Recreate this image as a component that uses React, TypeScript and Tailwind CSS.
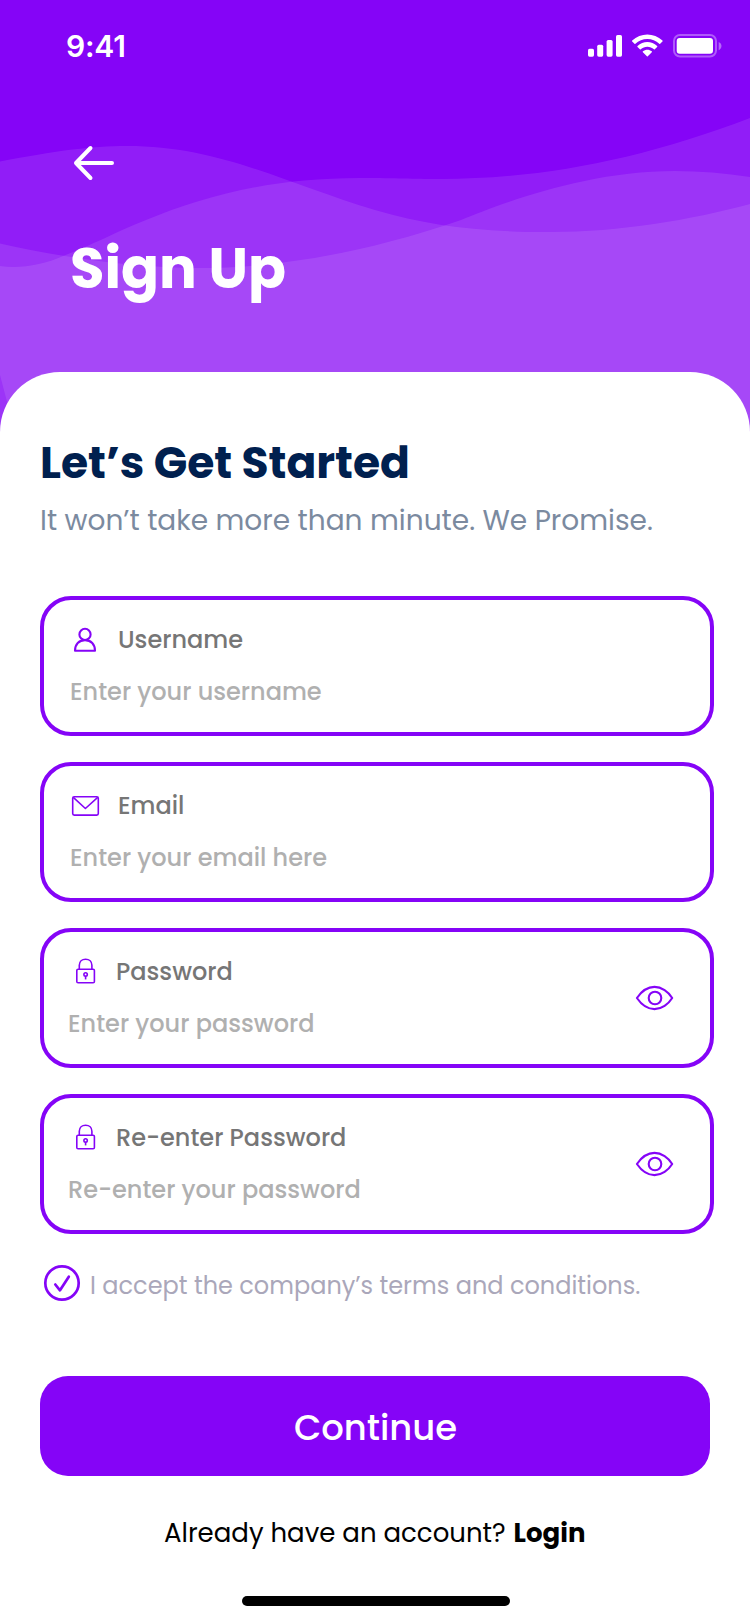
import type { ReactNode } from 'react'

function Waves() {
  return (
    <svg className="absolute left-0 top-0 -z-10" width="750" height="440" viewBox="0 0 750 440" fill="#fff" fillOpacity="0.1">
      <path d="M0 161.500C55 151 90 146 127 146C220 146 285 183 375 210C430 226 480 232 550 232C620 232 690 220 750 204V440H0Z" />
      <path d="M0 266C20 269 43 265 63 256C90 246 118 231 146 220C205 196 270 178 360 178C400 178 410 179 440 179C540 179 640 160 750 118V440H0Z" />
      <path d="M0 243.500C65 258 135 268 200 268C270 268 360 255 461 220C500 204 585 171 675 171C700 171 725 173 750 177V440H17L0 375Z" />
    </svg>
  )
}

function StatusIcons() {
  return (
    <svg width="136" height="24" viewBox="0 0 136 24" fill="#fff">
      <rect x="2" y="14.700" width="6" height="8" rx="1.600" />
      <rect x="11.200" y="10.700" width="6" height="12" rx="1.600" />
      <rect x="20.600" y="6" width="6" height="16.700" rx="1.600" />
      <rect x="30" y="1" width="6" height="21.700" rx="1.600" />
      <g transform="translate(46 0.500) scale(2)">
        <path d="M7.666 2.278C9.892 2.278 12.032 3.134 13.645 4.667C13.766 4.785 13.960 4.784 14.080 4.663L15.241 3.490C15.302 3.429 15.335 3.346 15.335 3.260C15.334 3.174 15.299 3.092 15.238 3.032C11.005-1.011 4.327-1.011 0.094 3.032C0.033 3.092-0.002 3.174-0.003 3.260C-0.004 3.346 0.030 3.429 0.091 3.490L1.252 4.663C1.372 4.784 1.566 4.785 1.687 4.667C3.300 3.133 5.441 2.278 7.666 2.278Z" />
        <path d="M7.666 6.096C8.889 6.096 10.068 6.550 10.975 7.371C11.097 7.487 11.290 7.485 11.410 7.365L12.569 6.192C12.631 6.130 12.664 6.047 12.664 5.960C12.663 5.873 12.627 5.791 12.565 5.730C9.805 3.155 5.531 3.155 2.770 5.730C2.708 5.791 2.672 5.873 2.672 5.960C2.671 6.047 2.705 6.130 2.766 6.192L3.925 7.365C4.045 7.485 4.238 7.487 4.361 7.371C5.266 6.551 6.445 6.096 7.666 6.096Z" />
        <path d="M9.989 8.665C9.991 8.752 9.958 8.836 9.897 8.897L7.891 10.921C7.832 10.980 7.752 11.014 7.668 11.014C7.584 11.014 7.504 10.980 7.446 10.921L5.439 8.897C5.378 8.836 5.345 8.752 5.347 8.665C5.349 8.578 5.386 8.495 5.449 8.437C6.729 7.298 8.607 7.298 9.887 8.437C9.950 8.495 9.987 8.578 9.989 8.665Z" />
      </g>
      <rect x="88" y="1" width="42" height="21.500" rx="6" fill="none" stroke="#fff" strokeOpacity="0.350" strokeWidth="2" />
      <rect x="90.700" y="4" width="36.300" height="15.700" rx="3" />
      <path d="M132.700 8V16.200C134.300 15.500 135.500 14 135.500 12.100C135.500 10.200 134.300 8.700 132.700 8Z" fillOpacity="0.400" />
    </svg>
  )
}

function UserIcon() {
  return (
    <svg width="30" height="28" viewBox="0 0 30 28" fill="none" stroke="#8504f7" strokeWidth="2.100" strokeLinejoin="round">
      <circle cx="15" cy="8.400" r="5.600" />
      <path d="M5 24.700C5 18.300 9 14.100 15 14.100S25 18.300 25 24.700Z" />
    </svg>
  )
}

function MailIcon() {
  return (
    <svg width="30" height="28" viewBox="0 0 30 28" fill="none" stroke="#8504f7" strokeWidth="1.600" strokeLinejoin="round">
      <rect x="2.700" y="4.700" width="25.600" height="18.400" rx="1.500" />
      <path d="M3.300 5.400L15.400 16.500L27.700 5.400" />
    </svg>
  )
}

function LockIcon() {
  return (
    <svg width="30" height="28" viewBox="0 0 30 28" fill="none" stroke="#8504f7" strokeWidth="1.600">
      <rect x="6.800" y="11.300" width="17.600" height="13.500" rx="1.300" />
      <path d="M9.300 11V7.200C9.300 3.400 12 1.200 15.600 1.200S21.900 3.400 21.900 7.200V11" />
      <circle cx="15.600" cy="16.400" r="1.700" />
      <path d="M15.600 18.100V21.400" />
    </svg>
  )
}

function EyeIcon() {
  return (
    <svg className="ml-auto shrink-0" width="40" height="28" viewBox="0 0 40 28" fill="none" stroke="#8504f7" strokeWidth="2.100" strokeLinejoin="round">
      <path d="M1.900 14C6 8 12.500 2.900 19.500 2.900S33.500 8 37.200 14C33.500 20 26.500 25.100 19.500 25.100S6 20 1.900 14Z" />
      <circle cx="20" cy="14" r="6.300" />
    </svg>
  )
}

type FieldProps = {
  icon: ReactNode
  label: string
  placeholder: string
  secret?: boolean
}

function Field({ icon, label, placeholder, secret }: FieldProps) {
  return (
    <div className={`flex h-[140px] items-center rounded-[31px] border-4 border-[#8504f7] pr-[35px] ${secret ? 'pl-6' : 'pl-[26px]'}`}>
      <div className="whitespace-nowrap text-2xl/6 font-medium">
        <div className="flex h-6 items-center">
          <span className={secret ? 'ml-[2px]' : ''}>{icon}</span>
          <span className={`text-[#767676] ${secret ? 'ml-4' : 'ml-[18px]'}`}>{label}</span>
        </div>
        <div className="mt-7 text-[#b0b0b0]">{placeholder}</div>
      </div>
      {secret && <EyeIcon />}
    </div>
  )
}

export default function App() {
  return (
    <div className="relative isolate flex h-[1624px] w-[750px] flex-col overflow-hidden bg-[#8504f7] font-[Poppins,Inter,sans-serif]">
      <Waves />
      <header className="flex h-[372px] shrink-0 flex-col text-white">
        <div className="flex items-center justify-between pl-[66px] pr-7 pt-[34px]">
          <span className="font-[Inter,sans-serif] text-[30px]/6 font-semibold tracking-[-0.2px]">9:41</span>
          <StatusIcons />
        </div>
        <svg className="ml-[72px] mt-[85px]" width="44" height="40" viewBox="0 0 44 40" fill="none" stroke="#fff" strokeWidth="4" strokeLinecap="round" strokeLinejoin="round">
          <path d="M40 20H4M18.500 5L4 20L18.500 35" />
        </svg>
        <h1 className="ml-[70px] mt-[58px] text-[56px]/[56px] font-bold">Sign Up</h1>
      </header>

      <main className="flex grow flex-col rounded-t-[60px] bg-white px-10 pt-[67px]">
        <h2 className="text-[44px]/[48px] font-bold text-[#00204f]">Let’s Get Started</h2>
        <p className="mt-[18px] whitespace-nowrap text-[28px]/8 text-[#7b8a9f]">It won’t take more than minute. We Promise.</p>

        <form className="mt-[59px] flex w-[674px] flex-col gap-[26px]">
          <Field icon={<UserIcon />} label="Username" placeholder="Enter your username" />
          <Field icon={<MailIcon />} label="Email" placeholder="Enter your email here" />
          <Field secret icon={<LockIcon />} label="Password" placeholder="Enter your password" />
          <Field secret icon={<LockIcon />} label="Re-enter Password" placeholder="Re-enter your password" />
        </form>

        <div className="mt-[29px] flex h-10 items-center pl-0.5">
          <svg width="40" height="40" viewBox="0 0 40 40" fill="none" stroke="#8504f7" strokeWidth="2.700" strokeLinecap="round" strokeLinejoin="round">
            <circle cx="20" cy="20" r="16.700" />
            <path d="M13.300 21.500L18 27.300L26.800 13.700" />
          </svg>
          <span className="ml-2 mt-[5px] whitespace-nowrap text-2xl/6 text-[#aaa7ba]">I accept the company’s terms and conditions.</span>
        </div>

        <button type="button" className="mt-[73px] h-[100px] w-[670px] rounded-[28px] bg-[#8504f7] pl-px pt-[3px] text-[35.4px]/[48px] font-medium text-white">
          Continue
        </button>

        <p className="mt-[41px] whitespace-nowrap pl-[124px] text-[26px]/8 text-black">
          Already have an account? <span className="ml-px font-bold">Login</span>
        </p>
        <div className="ml-[202px] mt-[47px] h-2.5 w-[268px] rounded-full bg-black" />
      </main>
    </div>
  )
}
